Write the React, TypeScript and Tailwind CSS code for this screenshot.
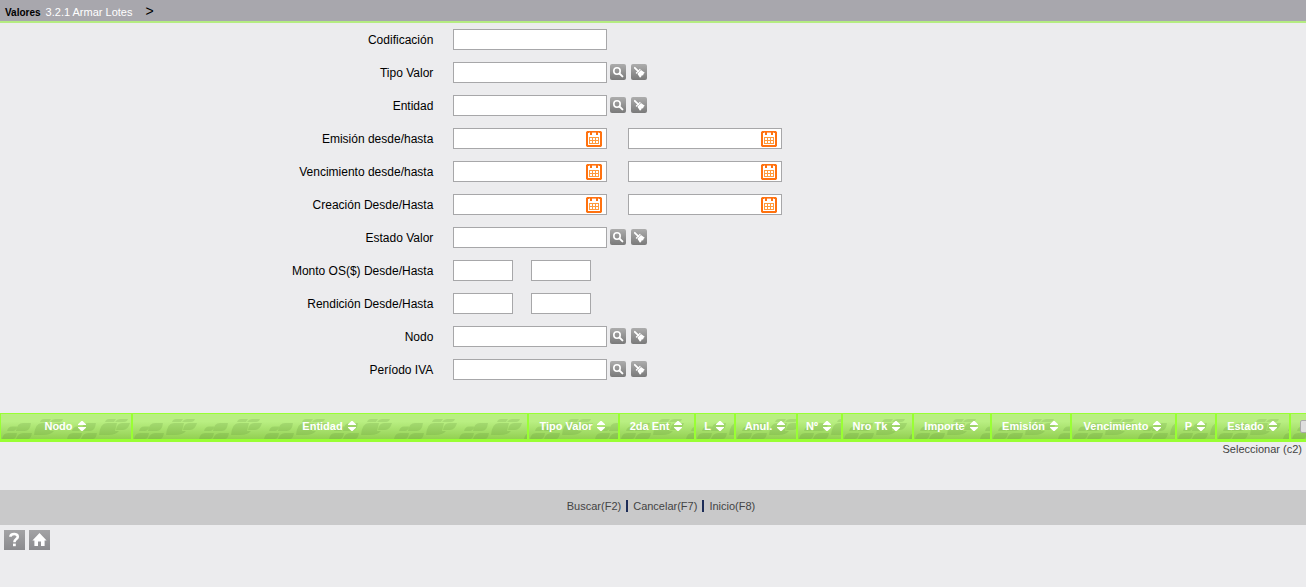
import { useId, useState, type ReactNode } from "react";

type FieldKind = "text" | "lookup" | "date" | "amount";

interface Field {
  id: string;
  label: string;
  kind: FieldKind;
}

const fields: Field[] = [
  { id: "codificacion", label: "Codificación", kind: "text" },
  { id: "tipoValor", label: "Tipo Valor", kind: "lookup" },
  { id: "entidad", label: "Entidad", kind: "lookup" },
  { id: "emision", label: "Emisión desde/hasta", kind: "date" },
  { id: "vencimiento", label: "Vencimiento desde/hasta", kind: "date" },
  { id: "creacion", label: "Creación Desde/Hasta", kind: "date" },
  { id: "estadoValor", label: "Estado Valor", kind: "lookup" },
  { id: "montoOs", label: "Monto OS($) Desde/Hasta", kind: "amount" },
  { id: "rendicion", label: "Rendición Desde/Hasta", kind: "amount" },
  { id: "nodo", label: "Nodo", kind: "lookup" },
  { id: "periodoIva", label: "Período IVA", kind: "lookup" },
];

// Entidad has no width, it takes what the other columns leave
const columns = [
  { title: "Nodo", width: "w-[132px]" },
  { title: "Entidad", width: "" },
  { title: "Tipo Valor", width: "w-[91px]" },
  { title: "2da Ent", width: "w-[76px]" },
  { title: "L", width: "w-[40px]" },
  { title: "Anul.", width: "w-[62px]" },
  { title: "Nº", width: "w-[45px]" },
  { title: "Nro Tk", width: "w-[71px]" },
  { title: "Importe", width: "w-[78px]" },
  { title: "Emisión", width: "w-[80px]" },
  { title: "Vencimiento", width: "w-[105px]" },
  { title: "P", width: "w-[40px]" },
  { title: "Estado", width: "w-[74px]" },
];

const inputBase = "h-[21px] border border-[#a7a7a9] bg-white px-1 text-xs outline-none";

function SearchIcon() {
  return (
    <svg width="16" height="16" viewBox="0 0 16 16" fill="none" stroke="#fff">
      <circle cx="7" cy="7" r="3.2" strokeWidth="1.6" />
      <path d="M9.6 9.6 L12.4 12.4" strokeWidth="2" strokeLinecap="round" />
    </svg>
  );
}

function BrushIcon() {
  return (
    <svg width="16" height="16" viewBox="0 0 16 16">
      <path d="M3.8 3.8 L7.4 7.4" stroke="#fff" strokeWidth="1.8" strokeLinecap="round" />
      <path d="M5.4 9 L9 5.4" stroke="#fff" strokeWidth="1.2" strokeLinecap="round" />
      <path d="M10 6 L13.800 8.800 L12.600 9.800 L12.200 11.200 L10.600 11.400 L10 13.200 L8.800 13.600 L6.400 9.800 Z" fill="#fff" />
    </svg>
  );
}

function CalendarIcon() {
  return (
    <svg width="16" height="16" viewBox="0 0 16 16" shapeRendering="crispEdges">
      <rect x="1" y="1" width="14" height="14" fill="#fff" stroke="#ff7210" strokeWidth="2" />
      <path d="M0 0h1v1H0zM15 0h1v1h-1zM0 15h1v1H0zM15 15h1v1h-1z" fill="#ffc9a0" />
      <path d="M4 2h2v2H4zM10 2h2v2h-2z" fill="#ff7210" />
      <path d="M3 1h1v1H3zM6 1h4v1H6zM12 1h1v1h-1z" fill="#ffa870" />
      <path
        d="M3 6h10v1H3zM3 9h10v1H3zM3 12h10v1H3zM3 6h1v7H3zM6 6h1v7H6zM9 6h1v7H9zM12 6h1v7h-1z"
        fill="#ff9a3c"
      />
    </svg>
  );
}

function SortIcon() {
  return (
    <svg width="8" height="12" viewBox="0 0 8 12" fill="#fff">
      <path d="M3.4 1 H4.6 L8 4.2 V5 H0 V4.2 Z" />
      <path d="M0 7 H8 V7.8 L4.6 11 H3.4 L0 7.8 Z" />
    </svg>
  );
}

function HelpIcon() {
  return (
    <svg width="21" height="20" viewBox="0 0 21 20" fill="none" stroke="#fff" strokeWidth="2.6">
      <path d="M6.4 6.800 C6.600 3.200 13.800 3 13.800 6.800 C13.800 9.200 10.400 9 10.400 12.200" />
      <path d="M10.4 13.600 V16.200" strokeWidth="2.8" />
    </svg>
  );
}

function HomeIcon() {
  return (
    <svg width="21" height="20" viewBox="0 0 21 20" fill="#fff">
      <path d="M10.5 3 L17.6 10.4 H15.6 V16 H12 V11.6 H9 V16 H5.4 V10.4 H3.4 Z" />
    </svg>
  );
}

function IconButton({ label, children }: { label: string; children: ReactNode }) {
  return (
    <button
      type="button"
      aria-label={label}
      className="size-4 shrink-0 cursor-pointer overflow-hidden rounded-xs bg-linear-to-b from-[#adadad] to-[#7a7a7a]"
    >
      {children}
    </button>
  );
}

function DateInput({ id, label }: { id: string; label?: string }) {
  return (
    <div className="relative flex">
      <input id={id} type="text" aria-label={label} className={`${inputBase} w-[154px]`} />
      <button
        type="button"
        aria-label="Calendario"
        className="absolute right-[5px] top-[3px] size-4 cursor-pointer"
      >
        <CalendarIcon />
      </button>
    </div>
  );
}

function FieldRow({ field }: { field: Field }) {
  const { id, label, kind } = field;
  return (
    <div className="flex h-[33px] items-center">
      <label htmlFor={id} className="w-1/3 shrink-0 pr-0.5 text-right text-xs text-black">
        {label}
      </label>
      {kind === "text" && (
        <div className="flex pl-[18px]">
          <input id={id} type="text" className={`${inputBase} w-[154px]`} />
        </div>
      )}
      {kind === "lookup" && (
        <div className="flex pl-[18px]">
          <input id={id} type="text" className={`${inputBase} w-[154px]`} />
          <div className="flex gap-[5px] pl-[3px] pt-0.5">
            <IconButton label={`Buscar ${label}`}>
              <SearchIcon />
            </IconButton>
            <IconButton label={`Limpiar ${label}`}>
              <BrushIcon />
            </IconButton>
          </div>
        </div>
      )}
      {kind === "date" && (
        <div className="flex gap-[21px] pl-[18px]">
          <DateInput id={id} />
          <DateInput id={`${id}Hasta`} label={label} />
        </div>
      )}
      {kind === "amount" && (
        <div className="flex gap-[18px] pl-[18px]">
          <input id={id} type="text" className={`${inputBase} w-[60px]`} />
          <input id={`${id}Hasta`} type="text" aria-label={label} className={`${inputBase} w-[60px]`} />
        </div>
      )}
    </div>
  );
}

// Leaf texture behind each header cell, repeats every 65px
function LeafTexture() {
  const id = useId();
  return (
    <svg className="absolute inset-0 size-full" aria-hidden="true">
      <pattern id={id} width="65" height="26" patternUnits="userSpaceOnUse">
        <g fill="#4f7f2f" fillOpacity="0.18">
          <path d="M6 17 Q7 12.500 11 12.500 H16 Q15 17 12 17 Z" />
          <path d="M15 17 Q16 9 22 9 H30 Q29 17 24 17 Z" />
          <path d="M1 25 Q2 19 7 19 H16 Q15 25 12 25 Z" />
          <path d="M15 25 Q17 19 22 19 H31 Q30 25 27 25 Z" />
          <path d="M33 21 Q34 9 41 9 H51 L49 17 H53 Q50 21 42 21 Z" />
          <path d="M50 16 Q51 9 56 9 H64 Q62 16 57 16 Z" />
          <path d="M39 8 Q40 5 43 5 H50 L48 8 Z" />
          <path d="M49 8 Q51 5 54 5 H62 Q61 8 58 8 Z" />
        </g>
      </pattern>
      <rect width="100%" height="100%" fill={`url(#${id})`} />
    </svg>
  );
}

const thClass =
  "relative h-[29px] border-x border-t border-b-[3px] border-[#99ff33] bg-linear-to-b from-[#b9ef82] from-30% to-[#93d052] p-0";

export default function App() {
  const [allSelected, setAllSelected] = useState(false);

  return (
    <div className="min-h-screen overflow-hidden bg-[#ececee] font-['Liberation_Sans',Arial,sans-serif]">
      <header className="flex h-[23px] items-baseline border-b-2 border-[#b5ec82] bg-[#a8a7ad] pl-[5px] pt-[3px]">
        <span className="text-[10px] font-bold text-black">Valores</span>
        <a href="#" className="pl-[5px] text-[11px] leading-4 text-white">
          3.2.1 Armar Lotes
        </a>
        <span className="pl-[13px] text-sm leading-4 text-black">&gt;</span>
      </header>

      <form onSubmit={(e) => e.preventDefault()}>
        {fields.map((field) => (
          <FieldRow key={field.id} field={field} />
        ))}
      </form>

      <table className="mt-[27px] w-[calc(100%+17px)] table-fixed border-separate border-spacing-0">
        <colgroup>
          {columns.map((col) => (
            <col key={col.title} className={col.width} />
          ))}
          <col className="w-[33px]" />
        </colgroup>
        <thead>
          <tr>
            {columns.map((col) => (
              <th key={col.title} scope="col" className={thClass}>
                <LeafTexture />
                <button
                  type="button"
                  className="relative mx-auto flex cursor-pointer items-center gap-[5px] whitespace-nowrap pb-0.5 pr-0.5 text-[11px] leading-4 font-bold text-white"
                >
                  {col.title}
                  <SortIcon />
                </button>
              </th>
            ))}
            <th scope="col" className={thClass}>
              <LeafTexture />
              <input
                type="checkbox"
                aria-label="Seleccionar todos"
                checked={allSelected}
                onChange={(e) => setAllSelected(e.target.checked)}
                className="relative mx-auto block size-[13px] appearance-none rounded-xs border border-[#a9a9a9] bg-[#dedede] checked:bg-[#6b9e2e]"
              />
            </th>
          </tr>
        </thead>
      </table>

      <div className="flex h-12 justify-end pr-1">
        <a href="#" className="text-[11px] leading-[14px] text-[#444444]">
          Seleccionar (c2)
        </a>
      </div>

      <nav className="flex h-[35px] items-center justify-center gap-[5px] bg-[#c9c9ca] pb-[3px] pl-4 text-[11px] text-[#444444]">
        <a href="#">Buscar(F2)</a>
        <span className="h-3 w-0.5 bg-[#1c2c58]" />
        <a href="#">Cancelar(F7)</a>
        <span className="h-3 w-0.5 bg-[#1c2c58]" />
        <a href="#">Inicio(F8)</a>
      </nav>

      <footer className="flex gap-1 px-1 pt-[5px]">
        <button type="button" aria-label="Ayuda" className="cursor-pointer bg-linear-to-b from-[#a3a3a5] to-[#8b8b8e]">
          <HelpIcon />
        </button>
        <button type="button" aria-label="Inicio" className="cursor-pointer bg-linear-to-b from-[#a3a3a5] to-[#8b8b8e]">
          <HomeIcon />
        </button>
      </footer>
    </div>
  );
}
